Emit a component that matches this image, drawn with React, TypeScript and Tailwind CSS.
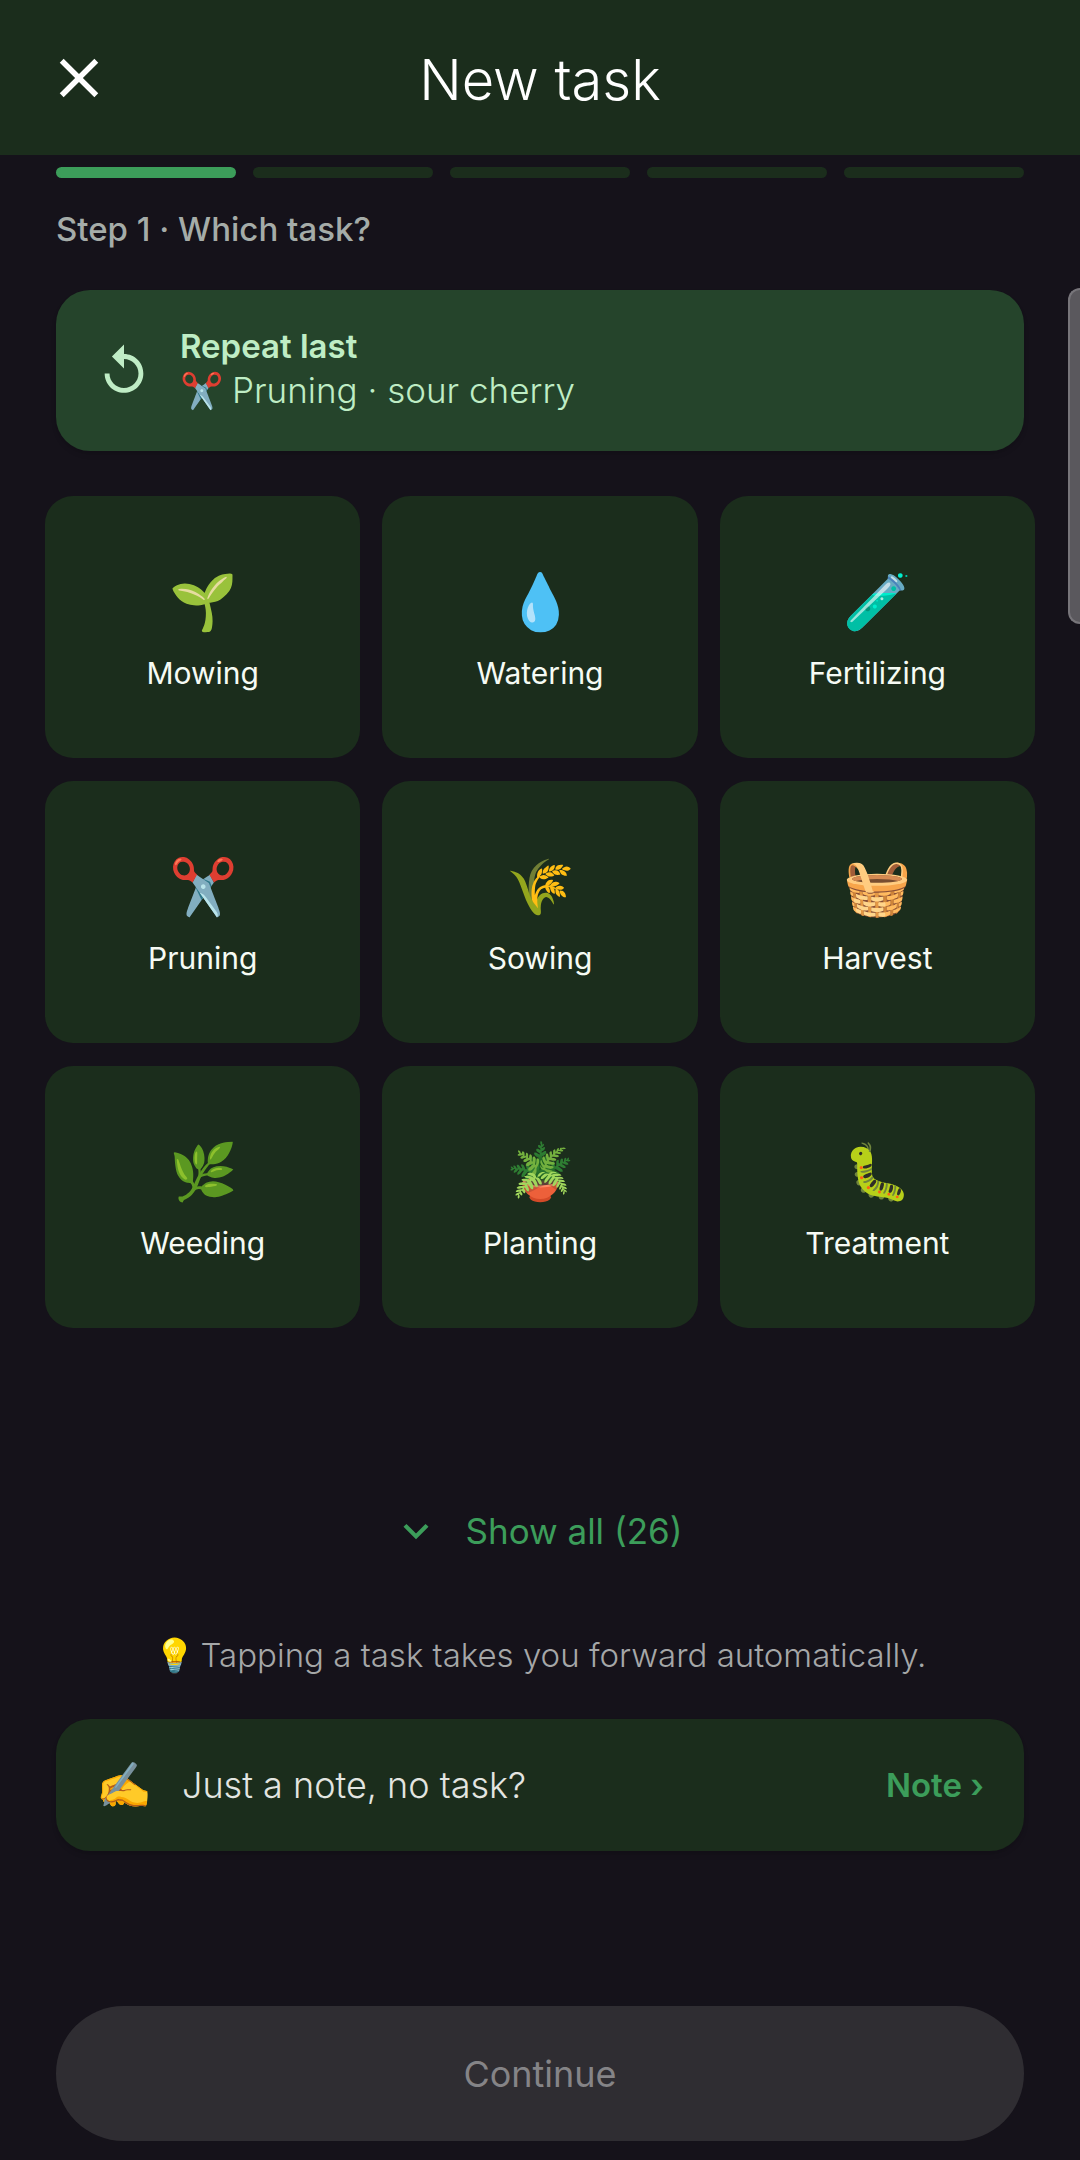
import React from 'react';
import { MdClose, MdExpandMore, MdReplay } from 'react-icons/md';

const tasks = [
  { name: 'Mowing', icon: '🌱' },
  { name: 'Watering', icon: '💧' },
  { name: 'Fertilizing', icon: '🧪' },
  { name: 'Pruning', icon: '✂️' },
  { name: 'Sowing', icon: '🌾' },
  { name: 'Harvest', icon: '🧺' },
  { name: 'Weeding', icon: '🌿' },
  { name: 'Planting', icon: '🪴' },
  { name: 'Treatment', icon: '🐛' },
];

const steps = [1, 2, 3, 4, 5];

const TaskCard = ({ task }: { task: { name: string; icon: string } }) => {
  return (
    <button
      type="button"
      className="h-[262px] pt-[8px] rounded-[28px] bg-[#1b2d1c] flex flex-col items-center justify-center gap-[20px]"
    >
      <span className="text-[55px] leading-[64px]">{task.icon}</span>
      <span className="text-[30px] leading-[40px] text-[#f6fbf4]">{task.name}</span>
    </button>
  );
};

const App = () => {
  return (
    <div className="relative min-h-screen bg-[#15121a] font-['Inter',sans-serif]">
      <header className="h-[155px] px-[46px] bg-[#1b2d1c] grid grid-cols-[66px_1fr_66px] items-center text-white">
        <button type="button" aria-label="Close">
          <MdClose size={66} />
        </button>
        <h1 className="pt-[4px] text-[56px] leading-[72px] font-light text-center">New task</h1>
      </header>

      <div className="px-[56px] pt-[12px] flex gap-[17px]">
        {steps.map((step) => (
          <div
            key={step}
            className={
              step === 1
                ? 'flex-1 h-[11px] rounded-[6px] bg-[#3c9d5a]'
                : 'flex-1 h-[11px] rounded-[6px] bg-[#1b2d1c]'
            }
          />
        ))}
      </div>

      <main>
        <p className="px-[56px] pt-[30px] text-[33px] leading-[42px] font-medium text-[#a5aca8]">
          Step 1 · Which task?
        </p>

        <div className="px-[56px] pt-[40px]">
          <button
            type="button"
            className="w-full h-[161px] px-[39px] rounded-[34px] bg-[#25442b] shadow-md flex items-center gap-[27px] text-left text-[#bfedc5]"
          >
            <MdReplay size={58} />
            <span className="pb-[4px] flex flex-col">
              <span className="text-[33px] leading-[42px] font-semibold">Repeat last</span>
              <span className="text-[35px] leading-[46px] font-light flex items-center gap-[8px]">
                <span>✂️</span>
                Pruning · sour cherry
              </span>
            </span>
          </button>
        </div>

        <div className="px-[45px] pt-[45px] grid grid-cols-3 gap-x-[22px] gap-y-[23px]">
          {tasks.map((task) => (
            <TaskCard key={task.name} task={task} />
          ))}
        </div>

        <div className="pt-[168px] flex justify-center">
          <button
            type="button"
            className="h-[70px] pr-[6px] flex items-center gap-[24px] text-[#3c9d5a]"
          >
            <MdExpandMore size={50} />
            <span className="text-[35px] leading-[46px]">Show all (26)</span>
          </button>
        </div>

        <p className="pt-[68px] flex justify-center items-center gap-[6px] text-[33px] leading-[42px] font-light text-[#a5a7a8]">
          <span>💡</span>
          Tapping a task takes you forward automatically.
        </p>

        <div className="px-[56px] pt-[43px]">
          <button
            type="button"
            className="w-full h-[132px] px-[40px] rounded-[34px] bg-[#1b2d1c] shadow-md flex items-center text-left"
          >
            <span className="text-[45px]">✍️</span>
            <span className="pl-[30px] text-[36px] leading-[46px] font-light text-[#e3e5e1]">
              Just a note, no task?
            </span>
            <span className="ml-auto text-[33px] leading-[42px] font-semibold text-[#3c9d5a]">
              Note ›
            </span>
          </button>
        </div>
      </main>

      <footer className="px-[56px] pt-[155px] pb-[18px]">
        <button
          type="button"
          disabled
          className="w-full h-[135px] rounded-full bg-[#2f2d32] text-[36px] leading-[46px] text-[#858487]"
        >
          Continue
        </button>
      </footer>

      <div className="absolute right-0 top-[288px] w-[12px] h-[336px] rounded-l-[12px] border-2 border-r-0 border-[#77757a] bg-[#5a585d]" />
    </div>
  );
};

export default App;
